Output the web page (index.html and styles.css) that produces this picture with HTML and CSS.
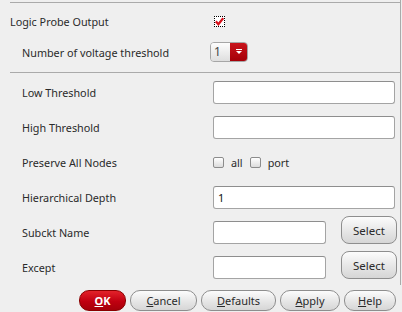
FILE: index.html
```html
<!DOCTYPE html>
<html lang="en">
<head>
    <meta charset="UTF-8">
    <title>Logic Probe Output</title>
    <link rel="stylesheet" href="styles.css">
</head>
<body>
    <div class="frame">
        <!-- Cabecera: salida y numero de umbrales -->
        <div class="top">
            <div class="row head">
                <span class="label">Logic Probe Output</span>
                <span class="check checked">
                    <svg width="9" height="9" viewBox="0 0 9 9"><path d="M0.8 4.4 L3.4 7.2 L8.2 1.2" fill="none" stroke="#d8111b" stroke-width="2.3"/></svg>
                </span>
            </div>
            <div class="row sub">
                <span class="label">Number of voltage threshold</span>
                <div class="combo">
                    <span class="combo-value">1</span>
                    <span class="combo-arrow">
                        <svg width="8" height="6" viewBox="0 0 8 6"><rect x="1" y="0" width="6" height="1" fill="#fff"/><path d="M1 2 H7 L4 5 Z" fill="#fff"/></svg>
                    </span>
                </div>
            </div>
        </div>

        <!-- Campos -->
        <div class="fields">
            <div class="row sub field">
                <span class="label">Low Threshold</span>
                <input class="entry" type="text">
            </div>
            <div class="row sub field">
                <span class="label">High Threshold</span>
                <input class="entry" type="text">
            </div>
            <div class="row sub field">
                <span class="label">Preserve All Nodes</span>
                <div class="options">
                    <span class="check"></span><span class="opt">all</span>
                    <span class="check"></span><span class="opt">port</span>
                </div>
            </div>
            <div class="row sub field">
                <span class="label">Hierarchical Depth</span>
                <input class="entry" type="text" value="1">
            </div>
            <div class="row sub field">
                <span class="label">Subckt Name</span>
                <div class="pick">
                    <input class="entry short" type="text">
                    <button class="btn select">Select</button>
                </div>
            </div>
            <div class="row sub field">
                <span class="label">Except</span>
                <div class="pick">
                    <input class="entry short" type="text">
                    <button class="btn select">Select</button>
                </div>
            </div>
        </div>
    </div>

    <div class="actions">
        <button class="btn pill ok"><u>O</u>K</button>
        <button class="btn pill cancel"><u>C</u>ancel</button>
        <button class="btn pill defaults"><u>D</u>efaults</button>
        <button class="btn pill apply"><u>A</u>pply</button>
        <button class="btn pill help"><u>H</u>elp</button>
    </div>
</body>
</html>
```

FILE: styles.css
```css
* {
    margin: 0;
    padding: 0;
    box-sizing: border-box;
}

body {
    width: 402px;
    height: 312px;
    background: #efefef;
    font-family: "Noto Sans", "DejaVu Sans", sans-serif;
    font-size: 10.8px;
    color: #2a2a2a;
    overflow: hidden;
}

.frame {
    margin-left: 10px;
    width: 391px;
    padding-top: 2px;
    border-right: 1px solid #aaa;
}

.top {
    border-top: 1px solid #aaa;
    border-bottom: 1px solid #aaa;
    padding: 1px 0 6px 0;
}

.row {
    display: grid;
    grid-template-columns: 203px 1fr;
    align-items: center;
}

.head {
    height: 34px;
}

.top .sub {
    height: 28px;
}

.sub .label {
    padding-left: 12px;
}

.fields {
    padding: 2px 5px 0 0;
}

.field {
    height: 35px;
}

/* casillas */
.check {
    display: inline-block;
    width: 11px;
    height: 11px;
    border: 1px solid #8c8c8c;
    border-radius: 2px;
    background: linear-gradient(#ffffff, #dcdcdc);
}

.check.checked {
    margin-left: 1px;
    border: 1px dotted #000;
    border-radius: 0;
    background: #fff;
}

.check.checked svg {
    display: block;
}

.options {
    display: flex;
    align-items: center;
}

.opt {
    margin: 0 7px 0 7px;
}

/* combo */
.combo {
    display: flex;
    width: 38px;
    height: 20px;
    margin-left: -3px;
    border: 1px solid #a6a6a6;
    border-radius: 4px;
    overflow: hidden;
}

.combo-value {
    flex: 1;
    padding-left: 3px;
    line-height: 18px;
    font-size: 12px;
    color: #444;
    background: linear-gradient(#fdfdfd, #dedede);
}

.combo-arrow {
    width: 17px;
    display: flex;
    align-items: center;
    justify-content: center;
    background: linear-gradient(#c8141c, #a50008);
}

/* entradas */
.entry {
    width: 182px;
    height: 23px;
    border: 1px solid #a4a4a4;
    border-top-color: #8e8e8e;
    border-radius: 3px;
    background: #fff;
    padding: 0 4px;
    font-family: "Noto Sans", "DejaVu Sans", sans-serif;
    font-size: 11px;
    color: #111;
    outline: none;
}

.entry.short {
    width: 113px;
}

.pick {
    display: flex;
    align-items: center;
    gap: 15px;
}

/* botones */
.btn {
    font-family: "Noto Sans", "DejaVu Sans", sans-serif;
    font-size: 11px;
    color: #2a2a2a;
    border: 1px solid #8e8e8e;
    background: linear-gradient(#fcfcfc, #e6e6e6 55%, #d6d6d6);
    cursor: pointer;
}

.select {
    width: 56px;
    height: 28px;
    margin-bottom: 5px;
    border-radius: 8px;
    font-size: 11.5px;
}

.actions {
    display: flex;
    justify-content: flex-end;
    gap: 4px;
    padding: 5px 6px 0 0;
}

.pill {
    height: 21px;
    border-radius: 10px;
}

.pill u {
    text-underline-offset: 1px;
}

.ok {
    width: 47px;
    color: #fff;
    font-weight: bold;
    border-color: #8a0000;
    background: linear-gradient(#e3222a, #c00010 55%, #a5000a);
}

.cancel {
    width: 67px;
}

.defaults {
    width: 75px;
}

.apply {
    width: 60px;
}

.help {
    width: 52px;
}
```
